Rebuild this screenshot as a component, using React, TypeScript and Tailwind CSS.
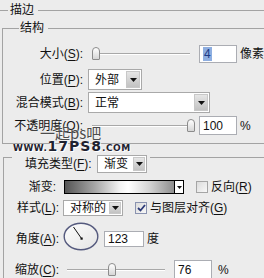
import React from "react";

function U({ c }: { c: string }) {
  return <span className="underline underline-offset-[2px] decoration-1">{c}</span>;
}

function Tri() {
  return (
    <svg width="7" height="4" viewBox="0 0 7 4">
      <polygon points="0,0 7,0 3.5,4" fill="#111" />
    </svg>
  );
}

function Thumb({ left }: { left: number }) {
  return (
    <div
      className="absolute top-[0px] w-[8px] h-[13px] rounded-t-[4px] rounded-b-[1px] border border-[#8c8c8c] bg-gradient-to-b from-white to-[#d6d6d6]"
      style={{ left }}
    />
  );
}

function Slider({ w, pos }: { w: string; pos: number }) {
  return (
    <div className={`relative ${w} h-[14px] shrink-0`}>
      <div className="absolute left-0 right-0 top-[6px] h-[2px] border-t border-[#a8a8a8] border-b border-b-white" />
      <Thumb left={pos} />
    </div>
  );
}

function Select({ w, text, btn }: { w: string; text: string; btn: string }) {
  return (
    <div className={`${w} h-full shrink-0 bg-white border border-[#a9a9a9] flex items-stretch`}>
      <span className="flex-1 pl-[6px] flex items-center">{text}</span>
      <div className={`${btn} m-[1px] bg-gradient-to-b from-[#e6e6e6] to-[#c2c2c2] border border-[#c8c8c8] flex items-center justify-center`}>
        <Tri />
      </div>
    </div>
  );
}

function Input({ w, children }: { w: string; children: React.ReactNode }) {
  return (
    <div className={`${w} h-full shrink-0 bg-white border border-[#abadb3] flex items-center pl-[3px]`}>{children}</div>
  );
}

export default function App() {
  return (
    <div className="relative w-[264px] h-[278px] overflow-hidden bg-[#ececec] text-[12px] leading-[14px] text-[#111] font-['Liberation_Sans','Noto_Sans_CJK_SC',sans-serif] flex flex-col">
      {/* Title */}
      <div className="h-[20px] flex items-center shrink-0">
        <div className="w-[8px] border-t border-[#a3a3a3]" />
        <span className="ml-[2px]">描边</span>
        <div className="flex-1 ml-[4px] border-t border-[#a3a3a3]" />
      </div>

      {/* Group 1 */}
      <div className="mt-[8px] ml-[2px] border-l border-b border-[#a3a3a3] pb-[8px] shrink-0 flex flex-col">
        <div className="-mt-[7px] h-[14px] flex items-center">
          <div className="w-[16px] border-t border-[#a3a3a3]" />
          <span className="ml-[1px]">结构</span>
          <div className="flex-1 ml-[4px] border-t border-[#a3a3a3]" />
        </div>

        <div className="mt-[10px] h-[18px] flex items-center">
          <div className="w-[80px] shrink-0 text-right">
            大小(<U c="S" />):
          </div>
          <div className="ml-[9px]">
            <Slider w="w-[98px]" pos={0} />
          </div>
          <div className="ml-[9px] h-full">
            <Input w="w-[38px]">
              <span className="bg-[#8eaee0] text-[#1d3a86] px-[1px]">4</span>
            </Input>
          </div>
          <span className="ml-[3px]">像素</span>
        </div>

        <div className="mt-[6px] h-[21px] flex items-center">
          <div className="w-[80px] shrink-0 text-right">
            位置(<U c="P" />):
          </div>
          <div className="ml-[5px] h-full">
            <Select w="w-[54px]" text="外部" btn="w-[14px]" />
          </div>
        </div>

        <div className="mt-[2px] h-[21px] flex items-center">
          <div className="w-[80px] shrink-0 text-right">
            混合模式(<U c="B" />):
          </div>
          <div className="ml-[5px] h-full">
            <Select w="w-[122px]" text="正常" btn="w-[14px]" />
          </div>
        </div>

        <div className="mt-[3px] h-[19px] flex items-center">
          <div className="w-[80px] shrink-0 text-right">
            不透明度(<U c="O" />):
          </div>
          <div className="ml-[9px]">
            <Slider w="w-[98px]" pos={95} />
          </div>
          <div className="ml-[9px] h-full">
            <Input w="w-[38px]">100</Input>
          </div>
          <span className="ml-[3px]">%</span>
        </div>
      </div>

      {/* Group 2 */}
      <div className="mt-[13px] ml-[3px] border-l border-[#a3a3a3] flex-1 flex flex-col">
        <div className="-mt-[2px] h-[18px] flex items-start">
          <div className="w-[8px] mt-[2px] border-t border-[#a3a3a3]" />
          <div className="ml-[13px] w-[68px] h-full flex items-center">
            填充类型(<U c="F" />):
          </div>
          <div className="ml-[4px] h-full">
            <Select w="w-[50px]" text="渐变" btn="w-[12px]" />
          </div>
          <div className="flex-1 ml-[3px] mt-[2px] border-t border-[#a3a3a3]" />
        </div>

        <div className="mt-[7px] h-[14px] flex items-center">
          <div className="w-[52px] shrink-0 text-right">渐变:</div>
          <div className="ml-[8px] h-full flex">
            <div className="w-[111px] h-full border border-black bg-[linear-gradient(to_right,#555555_0%,#a8a8a8_28%,#f2f2f2_50%,#ffffff_58%,#d2d2d2_78%,#8e8e8e_100%)]" />
            <div className="w-[9px] h-full border border-l-0 border-black bg-white flex items-center justify-center">
              <svg width="5" height="3" viewBox="0 0 5 3">
                <polygon points="0,0 5,0 2.5,3" fill="#111" />
              </svg>
            </div>
          </div>
          <div className="ml-[12px] w-[12px] h-[12px] border border-[#a5a5a5] bg-gradient-to-br from-[#dcdcdc] to-[#f8f8f8]" />
          <span className="ml-[3px]">
            反向(<U c="R" />)
          </span>
        </div>

        <div className="mt-[6px] h-[16px] flex items-center">
          <div className="w-[55px] shrink-0 text-right">
            样式(<U c="L" />):
          </div>
          <div className="ml-[4px] h-full">
            <Select w="w-[60px]" text="对称的" btn="w-[12px]" />
          </div>
          <div className="ml-[12px] w-[12px] h-[12px] border border-[#8a93b0] bg-gradient-to-br from-[#dcdcdc] to-[#f8f8f8] flex items-center justify-center">
            <svg width="9" height="8" viewBox="0 0 9 8">
              <polyline points="1,4 3.5,6.5 8,1" fill="none" stroke="#2c3a78" strokeWidth="1.8" />
            </svg>
          </div>
          <span className="ml-[3px]">
            与图层对齐(<U c="G" />)
          </span>
        </div>

        <div className="mt-[6px] h-[28px] flex items-start">
          <div className="w-[55px] shrink-0 text-right mt-[10px]">
            角度(<U c="A" />):
          </div>
          <div className="ml-[4px]">
            <svg width="36" height="29" viewBox="0 0 36 29">
              <defs>
                <linearGradient id="dg" x1="0" y1="0" x2="1" y2="1">
                  <stop offset="0" stopColor="#fdfdfd" />
                  <stop offset="1" stopColor="#e4e4e4" />
                </linearGradient>
              </defs>
              <ellipse cx="18" cy="14.5" rx="16.8" ry="13.3" fill="url(#dg)" stroke="#555a7e" strokeWidth="1.4" />
              <line x1="18.5" y1="16.5" x2="10.5" y2="5" stroke="#111" strokeWidth="1" />
              <rect x="17.5" y="15.5" width="2.2" height="2.2" fill="#111" />
            </svg>
          </div>
          <div className="ml-[5px] mt-[9px] h-[16px]">
            <Input w="w-[40px]">123</Input>
          </div>
          <span className="ml-[3px] mt-[10px]">度</span>
        </div>

        <div className="mt-[10px] h-[19px] flex items-center">
          <div className="w-[55px] shrink-0 text-right">
            缩放(<U c="C" />):
          </div>
          <div className="ml-[8px]">
            <Slider w="w-[98px]" pos={41} />
          </div>
          <div className="ml-[9px] h-full">
            <Input w="w-[38px]">76</Input>
          </div>
          <span className="ml-[6px]">%</span>
        </div>
      </div>

      {/* watermarks */}
      <div className="absolute left-[40px] top-[125px] text-[15px] leading-[16px] text-[#4d4d4d] [text-shadow:0_0_2px_#ffffff] font-['Noto_Sans_CJK_SC',sans-serif]">
        一起ps吧
      </div>
      <div className="absolute left-[13px] top-[139px] flex items-end leading-none font-['DejaVu_Sans',sans-serif] font-black text-[#1f2230] [text-shadow:0_0_1px_#ffffff,1px_1px_0_#ffffff]">
        <span className="text-[9px] tracking-[0.5px]">WWW.</span>
        <span className="text-[14px] tracking-[1px]">17PS8</span>
        <span className="text-[9px] tracking-[0.5px]">.COM</span>
      </div>
    </div>
  );
}
